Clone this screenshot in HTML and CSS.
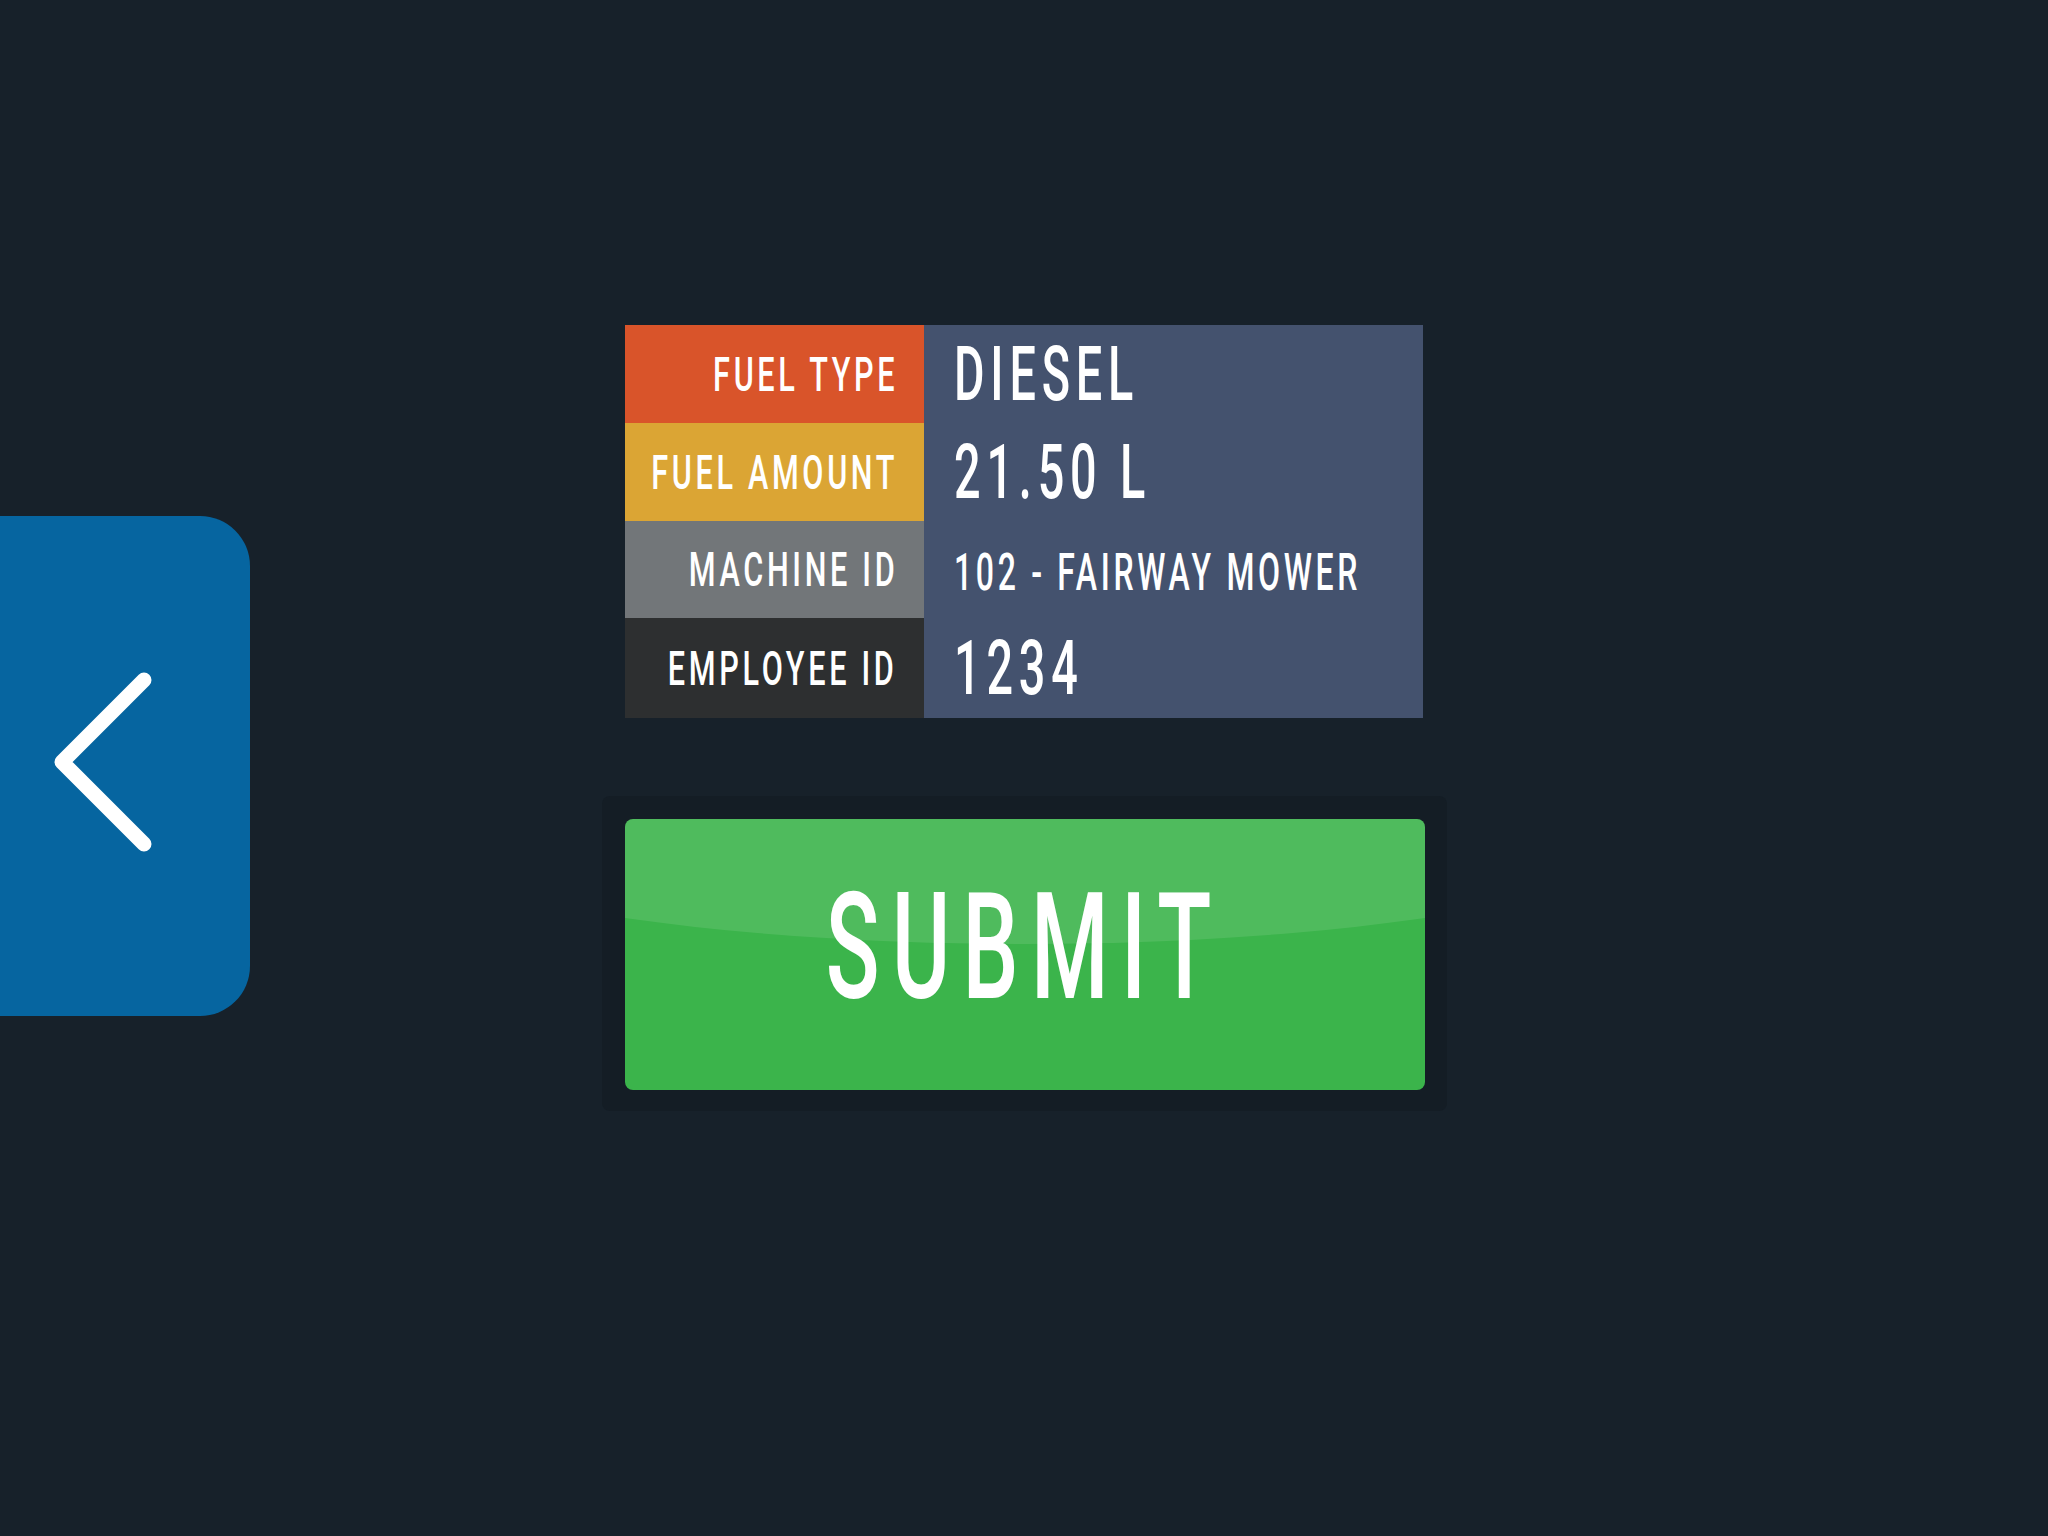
FILE: index.html
```html
<!DOCTYPE html>
<html lang="en">
<head>
<meta charset="utf-8">
<title>Fuel Summary</title>
<link rel="stylesheet" href="styles.css">
</head>
<body>
<div class="screen">
  <button class="back" aria-label="Back">
    <svg class="back-icon" width="250" height="500" viewBox="0 0 250 500">
      <path d="M144 164 L62 246 L144 328" fill="none" stroke="#fff" stroke-width="15" stroke-linecap="round" stroke-linejoin="round"/>
    </svg>
  </button>
  <main class="main">
    <div class="summary">
      <div class="label label-fuel"><span class="txt">FUEL TYPE</span></div>
      <div class="value value-big"><span class="txt">DIESEL</span></div>
      <div class="label label-amount"><span class="txt">FUEL AMOUNT</span></div>
      <div class="value value-big"><span class="txt">21.50 L</span></div>
      <div class="label label-machine"><span class="txt">MACHINE ID</span></div>
      <div class="value value-small"><span class="txt">102 - FAIRWAY MOWER</span></div>
      <div class="label label-employee"><span class="txt">EMPLOYEE ID</span></div>
      <div class="value value-big"><span class="txt">1234</span></div>
    </div>
    <div class="submit-wrap">
      <button class="submit"><span class="submit-txt">SUBMIT</span></button>
    </div>
  </main>
  <div class="spacer"></div>
</div>
</body>
</html>
```

FILE: styles.css
```css
html, body {
  margin: 0;
  padding: 0;
}
body {
  width: 2048px;
  height: 1536px;
  background: #17212a;
  font-family: Roboto, "Liberation Sans", sans-serif;
  color: #fff;
  overflow: hidden;
}
.screen {
  display: grid;
  grid-template-columns: 250px 1fr 250px;
  height: 1536px;
}
.back {
  margin-top: 516px;
  width: 250px;
  height: 500px;
  padding: 0;
  border: none;
  border-radius: 0 50px 50px 0;
  background: #0665a0;
  display: block;
  cursor: pointer;
}
.back-icon {
  display: block;
}
.main {
  padding-top: 325px;
  display: flex;
  flex-direction: column;
  align-items: center;
}
.summary {
  width: 798px;
  display: grid;
  grid-template-columns: 299px 1fr;
  grid-template-rows: 98px 98px 97px 100px;
  background: #44526e;
}
.label, .value {
  display: flex;
  align-items: center;
  overflow: hidden;
  white-space: nowrap;
}
.label {
  justify-content: flex-end;
  padding-right: 32px;
  font-size: 49px;
  font-weight: 500;
  letter-spacing: 0.12em;
}
.label .txt {
  display: inline-block;
  transform: scaleX(0.625);
  transform-origin: right center;
  margin-right: -0.12em;
}
.label-fuel { background: #d9542a; }
.label-amount { background: #dba534; }
.label-machine { background: #727679; }
.label-employee { background: #2d2f30; }
.value {
  padding-left: 30px;
  font-weight: 500;
  letter-spacing: 0.125em;
}
.value .txt {
  display: inline-block;
  transform: scaleX(0.615);
  transform-origin: left center;
}
.value-big {
  font-size: 76px;
}
.value-small {
  font-size: 52px;
  padding-top: 5px;
  letter-spacing: 0.115em;
}
.submit-wrap {
  margin-top: 78px;
  padding: 23px 22px 21px 23px;
  background: #141d25;
  border-radius: 8px;
}
.submit {
  position: relative;
  overflow: hidden;
  display: flex;
  align-items: center;
  justify-content: center;
  width: 800px;
  height: 271px;
  padding: 0 0 14px 0;
  border: none;
  border-radius: 8px;
  background: #3bb44b;
  color: #fff;
  font-family: Roboto, "Liberation Sans", sans-serif;
  font-size: 148px;
  font-weight: 500;
  letter-spacing: 0.14em;
  cursor: pointer;
}
.submit::before {
  content: "";
  position: absolute;
  left: -300px;
  top: -165px;
  width: 1400px;
  height: 290px;
  border-radius: 50%;
  background: rgba(255, 255, 255, 0.1);
}
.submit-txt {
  position: relative;
  display: inline-block;
  transform: scaleX(0.6);
}
```
